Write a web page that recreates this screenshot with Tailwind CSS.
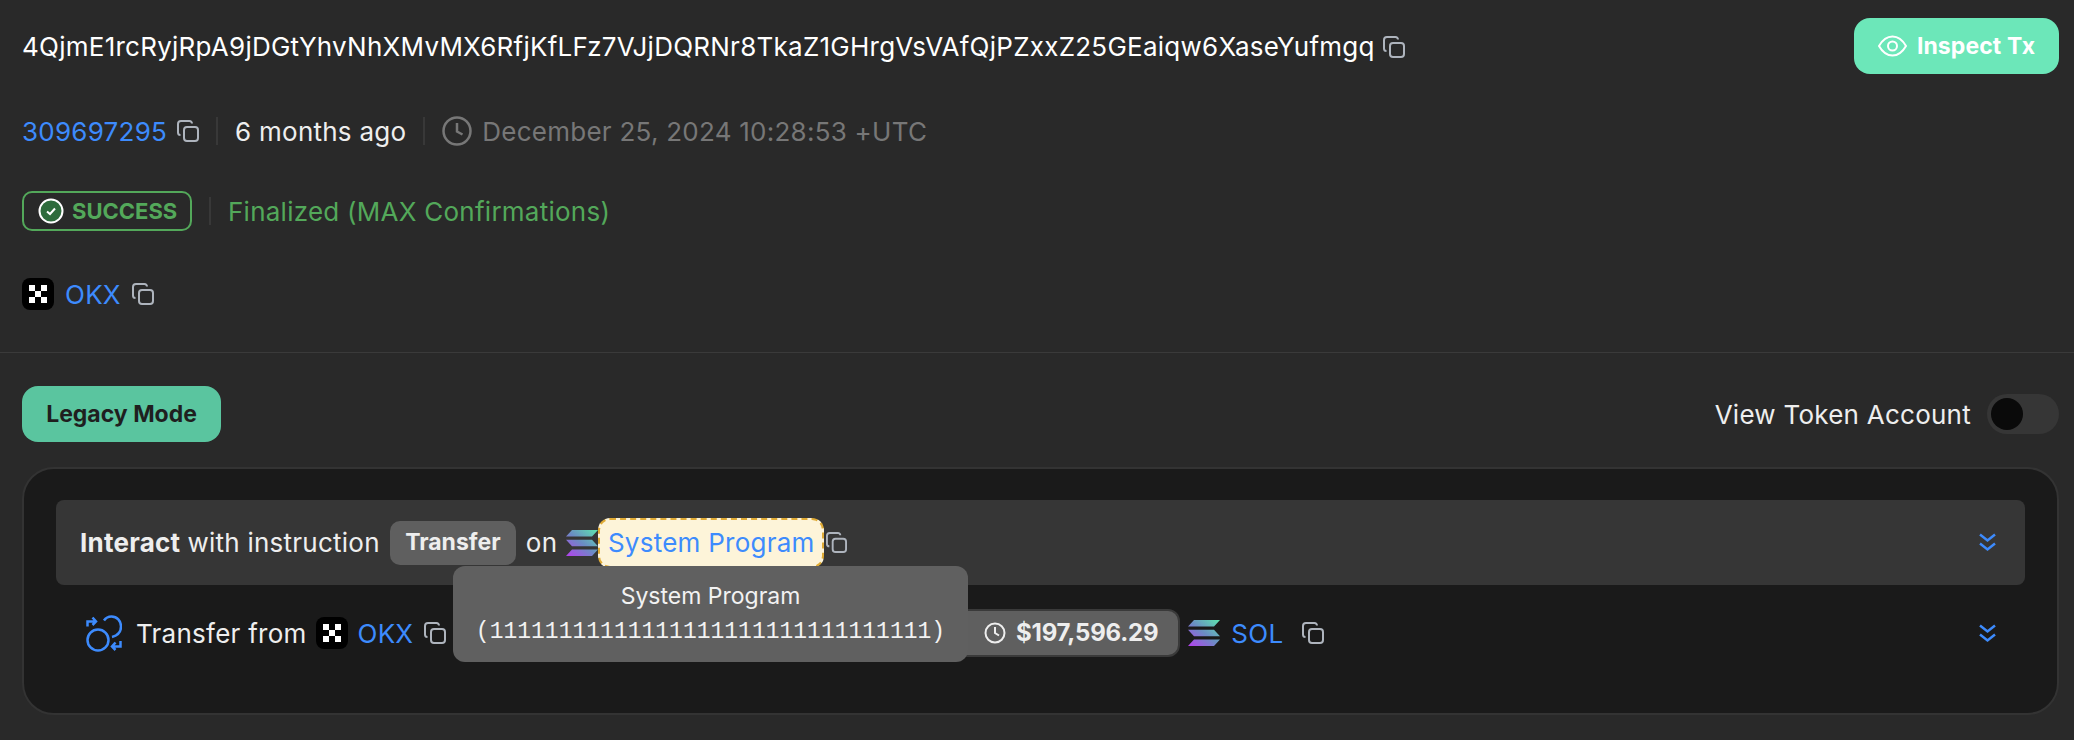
<!DOCTYPE html>
<html lang="en">
<head>
    <meta charset="UTF-8">
    <title>Transaction</title>
    <script src="https://cdn.jsdelivr.net/npm/@tailwindcss/browser@4"></script>
</head>
<body class="bg-[#292929] text-[#eeeeee] h-[740px] overflow-hidden font-['Inter','Liberation_Sans',sans-serif] text-[26px] tracking-[0.25px]">
    <svg width="0" height="0" class="absolute">
        <defs>
            <linearGradient id="sol" x1="1" y1="0" x2="0" y2="1">
                <stop offset="0" stop-color="#5ce6ae"/>
                <stop offset="0.5" stop-color="#6b8cc4"/>
                <stop offset="1" stop-color="#b63ff0"/>
            </linearGradient>
            <symbol id="copy" viewBox="0 0 22 22">
                <rect x="7" y="7" width="14" height="14" rx="3" fill="none" stroke="#aeb4bd" stroke-width="2"/>
                <path d="M3.5 15A2.5 2.5 0 0 1 1 12.500V4a3 3 0 0 1 3-3h8.500A2.500 2.500 0 0 1 15 3.500" fill="none" stroke="#aeb4bd" stroke-width="2"/>
            </symbol>
            <symbol id="okx" viewBox="0 0 32 32">
                <rect width="32" height="32" rx="8" fill="#000"/>
                <path d="M7 7h6v6H7zM19 7h6v6h-6zM13 13h6v6h-6zM7 19h6v6H7zM19 19h6v6h-6z" fill="#fff"/>
            </symbol>
            <symbol id="solana" viewBox="0 0 32 26">
                <path d="M6 0h26l-6 6.500H0zM0 9.700h26l6 6.500H6zM6 19.500h26l-6 6.500H0z" fill="url(#sol)"/>
            </symbol>
            <symbol id="chev" viewBox="0 0 17 19">
                <path d="M1 1.500l7.500 6 7.500-6M1 10.500l7.500 6 7.500-6" fill="none" stroke="#3d8bfd" stroke-width="2.500"/>
            </symbol>
        </defs>
    </svg>

    <div class="pl-[22px] pr-[15px]">
        <!-- hash + inspect -->
        <div class="flex items-center justify-between pt-[18px]">
            <div class="flex items-center gap-[8px]">
                <span class="text-white">4QjmE1rcRyjRpA9jDGtYhvNhXMvMX6RfjKfLFz7VJjDQRNr8TkaZ1GHrgVsVAfQjPZxxZ25GEaiqw6XaseYufmgq</span>
                <svg class="w-[22px] h-[22px] mt-[2px]"><use href="#copy"/></svg>
            </div>
            <button class="w-[205px] h-[56px] rounded-[16px] bg-[#6ce7b9] text-white font-bold text-[23px] tracking-[0.1px] flex items-center justify-center gap-[10px]">
                <svg class="w-[29px] h-[22px]" viewBox="0 0 29 22" fill="none" stroke="#fff" stroke-width="2"><path d="M1 11C5 4 9 1.500 14.500 1.500S24 4 28 11c-4 7-8 9.500-13.500 9.500S5 18 1 11z"/><circle cx="14.500" cy="11" r="4.500"/></svg>
                Inspect Tx
            </button>
        </div>

        <!-- slot / age -->
        <div class="flex items-center h-[40px] mt-[37px]">
            <a class="text-[#3d8bfd]">309697295</a>
            <svg class="w-[22px] h-[22px] ml-[10px]"><use href="#copy"/></svg>
            <span class="w-[2px] h-[28px] bg-[#383838] ml-[17px]"></span>
            <span class="ml-[17px]">6 months ago</span>
            <span class="w-[2px] h-[28px] bg-[#383838] ml-[17px]"></span>
            <svg class="w-[30px] h-[30px] ml-[17px]" viewBox="0 0 30 30" fill="none" stroke="#777" stroke-width="2.500"><circle cx="15" cy="15" r="13.500"/><path d="M15 7v8.500l5.500 3"/></svg>
            <span class="ml-[10px] text-[#777777]">December 25, 2024 10:28:53 +UTC</span>
        </div>

        <!-- status -->
        <div class="flex items-center h-[40px] mt-[40px]">
            <div class="w-[170px] h-[40px] border-2 border-[#53a85a] rounded-[10px] flex items-center pl-[14px] gap-[8px]">
                <svg class="w-[26px] h-[26px] shrink-0" viewBox="0 0 26 26"><circle cx="13" cy="13" r="11.500" fill="#2e6b3c" stroke="#fff" stroke-width="2"/><path d="M9 13.500l3 2.500 5-5.500" fill="none" stroke="#fff" stroke-width="2"/></svg>
                <span class="text-[#53a85a] font-bold text-[22px] tracking-[0px]">SUCCESS</span>
            </div>
            <span class="w-[2px] h-[28px] bg-[#383838] ml-[17px]"></span>
            <span class="ml-[17px] text-[#53a85a]">Finalized (MAX Confirmations)</span>
        </div>

        <!-- signer -->
        <div class="flex items-center h-[40px] mt-[43px]">
            <svg class="w-[32px] h-[32px]"><use href="#okx"/></svg>
            <a class="ml-[11px] text-[#3d8bfd]">OKX</a>
            <svg class="w-[22px] h-[22px] ml-[11px]"><use href="#copy"/></svg>
        </div>
    </div>

    <div class="h-px bg-[#3a3a3a] mt-[38px]"></div>

    <div class="pl-[22px] pr-[15px]">
        <div class="flex items-center justify-between mt-[33px]">
            <button class="w-[199px] h-[56px] rounded-[16px] bg-[#5ac59f] text-[#1f1f1f] font-bold text-[23px] tracking-[0px]">Legacy Mode</button>
            <div class="flex items-center gap-[16px]">
                <span>View Token Account</span>
                <div class="w-[72px] h-[40px] rounded-full bg-[#363636] flex items-center pl-[4px]">
                    <div class="w-[32px] h-[32px] rounded-full bg-[#0a0a0a]"></div>
                </div>
            </div>
        </div>

        <!-- instructions card -->
        <div class="relative h-[248px] mt-[25px] bg-[#1a1a1a] border-2 border-[#333333] rounded-[32px] pt-[31px] px-[32px]">
            <div class="h-[85px] bg-[#363636] rounded-[8px] flex items-center pl-[24px] pr-[29px]">
                <span class="font-bold">Interact</span>
                <span class="ml-[7px]">with instruction</span>
                <span class="ml-[10px] w-[126px] h-[44px] rounded-[10px] bg-[#5f5f5f] flex items-center justify-center font-bold text-[23px] tracking-[0px]">Transfer</span>
                <span class="ml-[10px]">on</span>
                <svg class="w-[32px] h-[26px] ml-[9px]"><use href="#solana"/></svg>
                <a class="w-[226px] h-[50px] rounded-[12px] bg-[#fdf4d9] border-2 border-dashed border-[#e0ab35] flex items-center justify-center text-[#3d8bfd]">System Program</a>
                <svg class="w-[21px] h-[21px] ml-[2px]"><use href="#copy"/></svg>
                <svg class="w-[17px] h-[19px] ml-auto"><use href="#chev"/></svg>
            </div>

            <div class="flex items-center h-[48px] mt-[24px] pl-[30px] pr-[29px]">
                <svg class="w-[36px] h-[37px]" viewBox="0 0 36 37" fill="none" stroke="#3d8bfd" stroke-width="2.500">
                    <circle cx="12" cy="25" r="10.500"/>
                    <path d="M18 5.500C20 2.500 23 1.500 25.500 1.500 31 1.500 35 6 35 11.500c0 5-3 9-9 10.500"/>
                    <path d="M1.500 11.500V6.500h8M6.500 2.500l3.500 4-3.500 3.500"/>
                    <path d="M34.500 26v5.500h-8M29.500 27.500l-3.500 4 3.500 3.500"/>
                </svg>
                <span class="ml-[14px]">Transfer from</span>
                <svg class="w-[32px] h-[32px] ml-[9px]"><use href="#okx"/></svg>
                <a class="ml-[10px] text-[#3d8bfd]">OKX</a>
                <svg class="w-[22px] h-[22px] ml-[11px]"><use href="#copy"/></svg>
                <span class="ml-[9px] w-[489px] shrink-0">to</span>
                <div class="w-[236px] h-[48px] bg-[#5f5f5f] border-2 border-[#3a3a3a] rounded-[12px] flex items-center justify-end pr-[20px] gap-[10px] shrink-0">
                    <svg class="w-[22px] h-[22px]" viewBox="0 0 22 22" fill="none" stroke="#eee" stroke-width="2"><circle cx="11" cy="11" r="9.500"/><path d="M11 5v6l4 2.500"/></svg>
                    <span class="font-bold text-[24px] tracking-[-0.2px]">$197,596.29</span>
                </div>
                <svg class="w-[32px] h-[26px] ml-[8px]"><use href="#solana"/></svg>
                <a class="ml-[11px] text-[#3d8bfd]">SOL</a>
                <svg class="w-[22px] h-[22px] ml-[19px]"><use href="#copy"/></svg>
                <svg class="w-[17px] h-[19px] ml-auto"><use href="#chev"/></svg>
            </div>

            <!-- tooltip -->
            <div class="absolute left-[429px] top-[97px] w-[515px] h-[96px] bg-[#606060] rounded-[12px] flex flex-col items-center justify-center text-[#f2f2f2] leading-[36px]">
                <span class="text-[23px] tracking-[0px]">System Program</span>
                <span class="text-[23px] tracking-[0px] font-['Liberation_Mono',monospace]">(11111111111111111111111111111111)</span>
            </div>
        </div>
    </div>
</body>
</html>
